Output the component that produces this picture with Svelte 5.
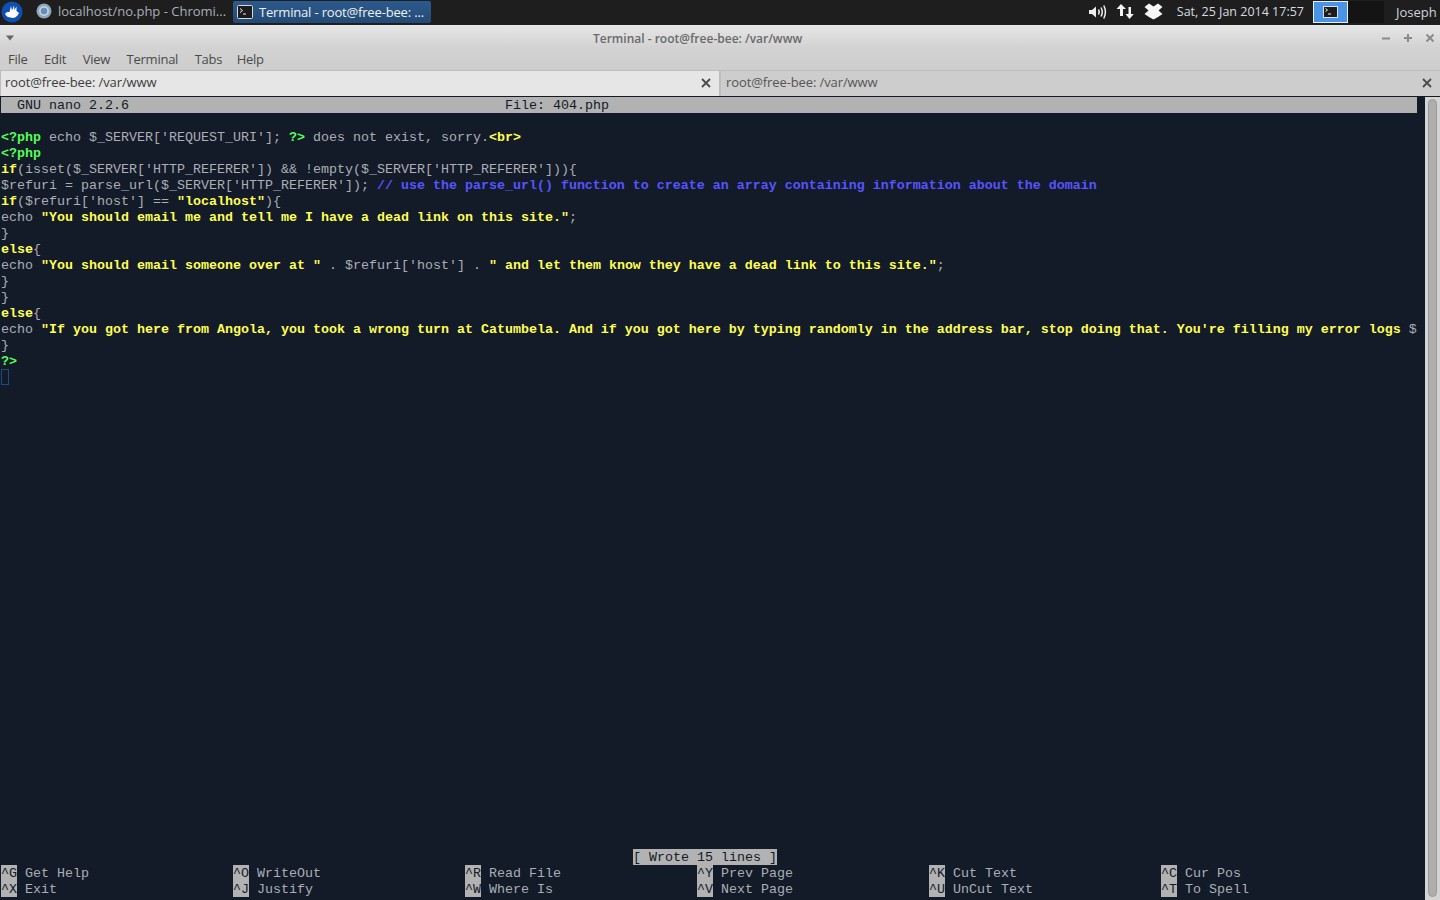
<script>
  const menus = ['File', 'Edit', 'View', 'Terminal', 'Tabs', 'Help'];

  // each line is a list of [class, text] segments, nano's php colouring
  const code = [
    [['g', '<?php'], ['', ' echo $_SERVER[\'REQUEST_URI\']; '], ['g', '?>'], ['', ' does not exist, sorry.'], ['y', '<br>']],
    [['g', '<?php']],
    [['y', 'if'], ['', "(isset($_SERVER['HTTP_REFERER']) && !empty($_SERVER['HTTP_REFERER'])){"]],
    [['', "$refuri = parse_url($_SERVER['HTTP_REFERER']); "], ['b', '// use the parse_url() function to create an array containing information about the domain']],
    [['y', 'if'], ['', "($refuri['host'] == "], ['y', '"localhost"'], ['', '){']],
    [['', 'echo '], ['y', '"You should email me and tell me I have a dead link on this site."'], ['', ';']],
    [['', '}']],
    [['y', 'else'], ['', '{']],
    [['', 'echo '], ['y', '"You should email someone over at "'], ['', " . $refuri['host'] . "], ['y', '" and let them know they have a dead link to this site."'], ['', ';']],
    [['', '}']],
    [['', '}']],
    [['y', 'else'], ['', '{']],
    [['', 'echo '], ['y', '"If you got here from Angola, you took a wrong turn at Catumbela. And if you got here by typing randomly in the address bar, stop doing that. You\'re filling my error logs '], ['', '$']],
    [['', '}']],
    [['g', '?>']]
  ];

  const shortcuts = [
    ['^G', 'Get Help', '^X', 'Exit'],
    ['^O', 'WriteOut', '^J', 'Justify'],
    ['^R', 'Read File', '^W', 'Where Is'],
    ['^Y', 'Prev Page', '^V', 'Next Page'],
    ['^K', 'Cut Text', '^U', 'UnCut Text'],
    ['^C', 'Cur Pos', '^T', 'To Spell']
  ];
</script>

<div class="desktop">
  <header class="panel">
    <svg class="logo" width="22" height="22" viewBox="0 0 22 22">
      <circle cx="11" cy="11" r="10.5" fill="#0f4fb0"/>
      <path d="M4 13 L6 11 L8.5 11 L10 5 L11 9.5 L13 4.5 L13.5 9 L15.5 5.5 L15.5 10 L18 12 L16.5 14.5 Q14 18 9.5 16.5 Q6 16.5 4 13 Z" fill="#fff"/>
    </svg>
    <span class="grip"></span>
    <div class="task">
      <svg width="16" height="16" viewBox="0 0 16 16">
        <circle cx="8" cy="8" r="7.5" fill="#8fa6b8"/>
        <circle cx="8" cy="8" r="5" fill="#c4d0d8"/>
        <circle cx="8" cy="8" r="3.2" fill="#5c90c4"/>
      </svg>
      <span>localhost/no.php - Chromi...</span>
    </div>
    <div class="task active">
      <svg width="16" height="14" viewBox="0 0 16 14">
        <rect x="0.5" y="0.5" width="15" height="13" rx="1" fill="#1c1c1c" stroke="#d8d8d8"/>
        <path d="M3 3.5 L5.5 5.5 L3 7.5 M6 9 H9" fill="none" stroke="#eee"/>
      </svg>
      <span>Terminal - root@free-bee: ...</span>
    </div>
    <div class="tray">
      <svg width="20" height="16" viewBox="0 0 20 16">
        <path d="M1 6 H4 L8 2.5 V13.5 L4 10 H1 Z" fill="#eee"/>
        <path d="M10.5 5.5 Q12 8 10.5 10.5 M13 3.5 Q15.5 8 13 12.5 M15.8 1.5 Q19 8 15.8 14.5" fill="none" stroke="#eee" stroke-width="1.5"/>
      </svg>
      <svg class="updown" width="18" height="17" viewBox="0 0 18 17">
        <path d="M5 1 L10 6 H7 V13 H4 V6 H0.5 Z M12.5 4 H15 V11 H17.8 L13.5 16 L9.5 11 H12.5 Z" fill="#f4f4f4"/>
      </svg>
      <svg class="box" width="19" height="17" viewBox="0 0 19 17">
        <path d="M5 0.5 L9.5 3.5 L14 0.5 L18.5 4 L14.5 7.5 L18.5 11 L14 14 L9.5 16.5 L5 14 L0.5 11 L4.5 7.5 L0.5 4 Z" fill="#f6f6f6"/>
      </svg>
      <span class="clock">Sat, 25 Jan 2014 17:57</span>
      <div class="pager">
        <div class="desk current">
          <svg width="15" height="12" viewBox="0 0 15 12">
            <rect x="0.5" y="0.5" width="14" height="11" fill="#1c1c1c" stroke="#e0e0e0"/>
            <path d="M2.5 2.5 L4.5 4 L2.5 5.5 M5 8 H8" fill="none" stroke="#eee"/>
          </svg>
        </div>
        <div class="desk"></div>
      </div>
      <span class="user">Joseph</span>
    </div>
  </header>

  <div class="titlebar">
    <svg class="winmenu" width="10" height="6" viewBox="0 0 10 6"><path d="M1 0.5 H9 L5 5.5 Z" fill="#666"/></svg>
    <span class="title">Terminal - root@free-bee: /var/www</span>
    <div class="controls">
      <svg width="12" height="12" viewBox="0 0 12 12"><path d="M2 6.5 H10" stroke="#8a8a8a" stroke-width="2"/></svg>
      <svg width="12" height="12" viewBox="0 0 12 12"><path d="M2 6 H10 M6 2 V10" stroke="#8a8a8a" stroke-width="2"/></svg>
      <svg width="12" height="12" viewBox="0 0 12 12"><path d="M2.5 2.5 L9.5 9.5 M9.5 2.5 L2.5 9.5" stroke="#8a8a8a" stroke-width="2"/></svg>
    </div>
  </div>

  <nav class="menubar">
    {#each menus as item}
      <span>{item}</span>
    {/each}
  </nav>

  <div class="tabs">
    <div class="tab current">
      <span>root@free-bee: /var/www</span>
      <svg width="10" height="10" viewBox="0 0 10 10"><path d="M1 1 L9 9 M9 1 L1 9" stroke="#4a4a4a" stroke-width="1.8"/></svg>
    </div>
    <div class="tab">
      <span>root@free-bee: /var/www</span>
      <svg width="10" height="10" viewBox="0 0 10 10"><path d="M1 1 L9 9 M9 1 L1 9" stroke="#4a4a4a" stroke-width="1.8"/></svg>
    </div>
  </div>

  <div class="body">
    <main class="term">
      <div class="row status"><span class="ver">GNU nano 2.2.6</span><span class="file">File: 404.php</span></div>
      <div class="row"></div>
      {#each code as line}
        <div class="row">{#each line as seg}<span class={seg[0]}>{seg[1]}</span>{/each}</div>
      {/each}
      <div class="row"><span class="cursor"></span></div>

      <div class="message"><span class="key">[ Wrote 15 lines ]</span></div>
      <div class="keys">
        {#each shortcuts as s}
          <div>
            <div class="row"><span class="key">{s[0]}</span> {s[1]}</div>
            <div class="row"><span class="key">{s[2]}</span> {s[3]}</div>
          </div>
        {/each}
      </div>
    </main>
    <div class="scrollbar"><div class="thumb"></div></div>
  </div>
</div>

<style>
  :global(body) {
    margin: 0;
    overflow: hidden;
  }

  .desktop {
    width: 1440px;
    height: 900px;
    display: flex;
    flex-direction: column;
    font-family: "Open Sans", sans-serif;
    font-size: 13px;
    overflow: hidden;
  }

  /* top panel */
  .panel {
    height: 26px;
    flex: none;
    box-sizing: border-box;
    padding-bottom: 2px;
    background: #1e1e1e;
    border-bottom: 1px solid #e8e8e8;
    display: flex;
    align-items: center;
    color: #a8b0b8;
  }

  .logo {
    margin-left: 1px;
    flex: none;
  }

  .grip {
    width: 7px;
    flex: none;
  }

  .task {
    width: 199px;
    height: 22px;
    box-sizing: border-box;
    padding: 0 0 2px 6px;
    display: flex;
    align-items: center;
    gap: 6px;
    white-space: nowrap;
  }

  .task.active {
    width: 198px;
    margin-left: 4px;
    padding: 0 0 0 4px;
    color: #f0f0f0;
    background: linear-gradient(#2c5a8c, #234a76);
    border-radius: 2px;
    letter-spacing: -0.17px;
  }

  .tray {
    margin-left: auto;
    display: flex;
    align-items: center;
    height: 100%;
  }

  .updown {
    margin-left: 8px;
  }

  .box {
    margin-left: 10px;
  }

  .clock {
    margin-left: 14px;
    font-size: 12.5px;
    color: #d8dce0;
    white-space: nowrap;
  }

  .pager {
    margin-left: 9px;
    display: flex;
    height: 22px;
  }

  .desk {
    width: 36px;
    box-sizing: border-box;
    background: #141414;
    display: flex;
    align-items: center;
    justify-content: center;
  }

  .desk.current {
    width: 35px;
    background: #4a94e8;
    border: 1px solid #e8f0f8;
  }

  .user {
    margin-left: 12px;
    width: 44px;
    color: #d0d4d8;
    white-space: nowrap;
  }

  /* window chrome */
  .titlebar {
    height: 22px;
    flex: none;
    box-sizing: border-box;
    padding: 2px 4px 0 5px;
    display: flex;
    align-items: center;
    position: relative;
    background: linear-gradient(#e6e6e6, #d2d2d2);
  }

  .title {
    position: absolute;
    left: 593px;
    font-size: 12px;
    font-weight: 600;
    color: #6a6a6a;
    white-space: nowrap;
  }

  .controls {
    margin-left: auto;
    display: flex;
    gap: 10px;
  }

  .menubar {
    height: 22px;
    flex: none;
    padding-left: 8px;
    display: flex;
    align-items: center;
    gap: 16.5px;
    background: linear-gradient(#d2d2d2, #cecece);
    color: #4a4a4a;
    letter-spacing: -0.25px;
  }

  .menubar span:last-child {
    margin-left: -2px;
  }

  .tabs {
    height: 27px;
    flex: none;
    display: flex;
    background: #cdcdcd;
    color: #555;
    border-bottom: 1px solid #131a28;
    box-sizing: border-box;
    letter-spacing: -0.1px;
  }

  .tab {
    width: 720px;
    box-sizing: border-box;
    padding: 0 8px 3px 5px;
    display: flex;
    align-items: center;
    justify-content: space-between;
    border-top: 1px solid #bdbdbd;
    border-left: 1px solid #bdbdbd;
  }

  .tab svg {
    margin-top: 2px;
  }

  .tab.current {
    padding-left: 4px;
    background: #e6e6e6;
    color: #3c3c3c;
    border-right: 1px solid #bdbdbd;
  }

  /* terminal */
  .body {
    flex: 1;
    display: flex;
    min-height: 0;
  }

  .term {
    width: 1425px;
    box-sizing: border-box;
    padding: 0 0 0 1px;
    display: flex;
    flex-direction: column;
    background: #131a28;
    color: #abafb5;
    font-family: "Liberation Mono", monospace;
    font-size: 13.33px;
    line-height: 18px;
  }

  .row {
    height: 16px;
    flex: none;
    white-space: pre;
  }

  .status {
    width: 1416px;
    display: flex;
    background: #b2b2b2;
    color: #131a28;
  }

  .ver {
    margin-left: 16px;
    width: 488px;
  }

  .g {
    color: #55ff55;
    font-weight: bold;
  }

  .y {
    color: #ffff55;
    font-weight: bold;
  }

  .b {
    color: #5555ff;
    font-weight: bold;
  }

  .cursor {
    display: block;
    width: 8px;
    height: 16px;
    box-sizing: border-box;
    border: 1px solid #1a4a8c;
  }

  .message {
    margin-top: auto;
    height: 16px;
    padding-left: 632px;
    flex: none;
    white-space: pre;
  }

  .keys {
    height: 35px;
    flex: none;
    display: grid;
    grid-template-columns: repeat(6, 232px);
  }

  .key {
    display: inline-block;
    height: 16px;
    vertical-align: top;
    background: #b2b2b2;
    color: #131a28;
  }

  .scrollbar {
    width: 15px;
    box-sizing: border-box;
    padding: 2px 3px 3px 3px;
    background: #d4d4d4;
  }

  .thumb {
    height: 100%;
    background: #aeaeae;
    border: 1px solid #9a9a9a;
    border-radius: 5px;
    box-sizing: border-box;
  }
</style>
